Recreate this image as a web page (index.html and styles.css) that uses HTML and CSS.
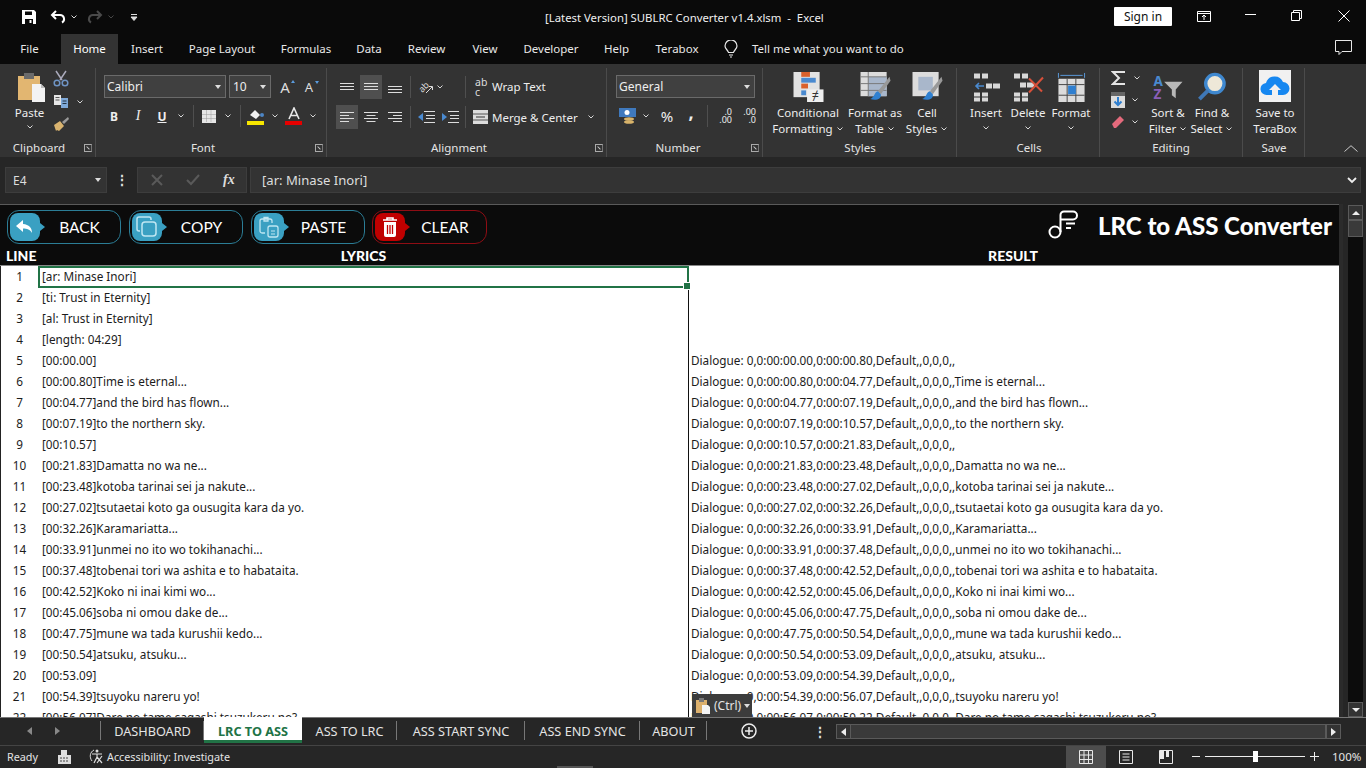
FILE: index.html
```html
<!DOCTYPE html>
<html lang="en">
<head>
<meta charset="utf-8">
<title>SUBLRC Converter</title>
<link rel="stylesheet" href="styles.css">
</head>
<body>
<svg class="defs" aria-hidden="true"><symbol id="chev" viewBox="0 0 8 8"><path d="M1.500 2.500 4 5l2.500-2.500" fill="none" stroke="#d8d8d8" stroke-width="1"/></symbol></svg>
<div class="app">
  <header class="titlebar">
    <div class="qat">
      <svg class="q-save" width="16" height="16" viewBox="0 0 16 16"><path d="M1 1h12l2 2v12H1z" fill="#fff"/><path d="M4 2.500h7v3.500H4zM4 10h8v5H4z" fill="#0a0a0a"/><path d="M8.500 11h2v3h-2z" fill="#fff"/></svg>
      <svg class="q-undo" width="16" height="16" viewBox="0 0 16 16"><path d="M6 2 2 6l4 4M2.500 6H10a4 4 0 0 1 2 7.500" fill="none" stroke="#fff" stroke-width="2"/></svg>
      <svg class="q-ch" width="8" height="8"><use href="#chev"/></svg>
      <svg class="q-redo" width="16" height="16" viewBox="0 0 16 16"><path d="M10 2l4 4-4 4M13.500 6H6a4 4 0 0 0-2 7.500" fill="none" stroke="#4a4a4a" stroke-width="2"/></svg>
      <svg class="q-ch dim" width="8" height="8"><use href="#chev"/></svg>
      <svg class="q-more" width="8" height="9" viewBox="0 0 8 9"><path d="M1 1.500h6M1 4l3 3.500L7 4z" fill="#ddd" stroke="#ddd"/></svg>
    </div>
    <div class="doc-title">[Latest Version] SUBLRC Converter v1.4.xlsm&nbsp; -&nbsp; Excel</div>
    <div class="win">
      <button class="signin">Sign in</button>
      <svg class="w-disp" width="14" height="12" viewBox="0 0 14 12"><path d="M.5 1.500h13v10H.5zM.5 3.500h13M7 10V5M5 7l2-2 2 2" fill="none" stroke="#fff"/></svg>
      <svg class="w-min" width="11" height="2"><path d="M0 .5h11" stroke="#fff"/></svg>
      <svg class="w-max" width="11" height="11" viewBox="0 0 11 11"><path d="M.5 2.500h8v8h-8zM2.500 2.500v-2h8v8h-2" fill="none" stroke="#fff"/></svg>
      <svg class="w-x" width="12" height="12" viewBox="0 0 12 12"><path d="M.5.500l11 11M11.500.500l-11 11" stroke="#fff"/></svg>
    </div>
  </header>

  <nav class="tabs">
    <span>File</span><span class="on">Home</span><span>Insert</span><span>Page Layout</span><span>Formulas</span><span>Data</span><span>Review</span><span>View</span><span>Developer</span><span>Help</span><span>Terabox</span>
    <svg class="bulb" width="14" height="18" viewBox="0 0 14 18"><path d="M4.500 12.500C4 10 1 9 1 6a6 6 0 0 1 12 0c0 3-3 4-3.500 6.500zM5 15h4M6 17h2" fill="none" stroke="#e8e8e8" stroke-width="1.200"/></svg>
    <span class="tell">Tell me what you want to do</span>
    <svg class="comment" width="17" height="16" viewBox="0 0 17 16"><path d="M.5.500h16v11H7l-3 3v-3H.5z" fill="none" stroke="#e8e8e8"/></svg>
  </nav>

  <section class="ribbon">
    <div class="grp g-clip">
      <div class="body clip-body">
        <div class="paste">
          <svg class="paste-ic" width="29" height="31" viewBox="0 0 29 31"><path d="M1 5h22v24H1z" fill="#e2b671"/><path d="M7 2h10v6H7z" fill="#6b6b6b"/><path d="M15 13h9l4 4v14H15z" fill="#f3f3f3"/><path d="M24 13v4h4" fill="#bdbdbd"/></svg>
          <span>Paste</span>
          <svg width="8" height="8"><use href="#chev"/></svg>
        </div>
        <div class="clip-small">
          <svg width="16" height="17" viewBox="0 0 16 17"><path d="M3 1l6 9M13 1L7 10" stroke="#aab" stroke-width="1.500"/><circle cx="4" cy="13" r="2.800" fill="none" stroke="#6f94c4" stroke-width="1.500"/><circle cx="12" cy="13" r="2.800" fill="none" stroke="#6f94c4" stroke-width="1.500"/></svg>
          <div class="copyline"><svg width="16" height="15" viewBox="0 0 16 15"><path d="M1 1h7v10H1z" fill="#e6e6e6"/><path d="M2.500 3.500h4M2.500 6h4" stroke="#555"/><path d="M8 4h7v10H8z" fill="#7fa9d8"/><path d="M9.500 7h4M9.500 9.500h4" stroke="#234"/></svg><svg width="8" height="8"><use href="#chev"/></svg></div>
          <svg width="17" height="16" viewBox="0 0 17 16"><path d="M1 9l6-4 4 5-5 5-2-1-1 1z" fill="#d9b36f"/><path d="M9 6l6-5 1 2-5 5z" fill="#9a9a9a"/></svg>
        </div>
      </div>
      <div class="glabel"><span class="gname gl-clip">Clipboard</span><i class="launch"></i></div>
    </div>

    <div class="grp g-font">
      <div class="body">
        <div class="row f-top">
          <div class="combo c-font"><span>Calibri</span><b></b></div>
          <div class="combo c-size"><span>10</span><b></b></div>
          <span class="bigA up">A</span><span class="bigA down">A</span>
        </div>
        <div class="row f-bot">
          <span class="slot st-b">B</span><span class="slot st-i">I</span><span class="slot st-u">U</span><span class="chv"><svg width="8" height="8"><use href="#chev"/></svg></span><i class="sep"></i>
          <span class="slot"><svg width="14" height="13" viewBox="0 0 14 13"><rect width="14" height="13" fill="#e6e6e6"/><path d="M.5 4.500h13M.5 8.500h13M4.500.500v12M9 .500v12" stroke="#9a9a9a" stroke-dasharray="1 1"/></svg></span><span class="chv"><svg width="8" height="8"><use href="#chev"/></svg></span><i class="sep"></i>
          <span class="slot"><svg width="18" height="18" viewBox="0 0 18 18"><path d="M3 8l5-5 5 5-4 4z" fill="#f0f0f0"/><circle cx="15" cy="8" r="2" fill="#4d86c6"/><rect x="0" y="14" width="17" height="4" fill="#f7e600"/></svg></span><span class="chv"><svg width="8" height="8"><use href="#chev"/></svg></span>
          <span class="slot colorA"><svg width="18" height="18" viewBox="0 0 18 18"><path d="M4 12 9 1l5 11M6 8.500h6" fill="none" stroke="#e8e8e8" stroke-width="1.600"/><rect y="14" x="0" width="17" height="4" fill="#e60000"/></svg></span><span class="chv"><svg width="8" height="8"><use href="#chev"/></svg></span>
        </div>
      </div>
      <div class="glabel"><span class="gname gl-font">Font</span><i class="launch"></i></div>
    </div>

    <div class="grp g-align">
      <div class="body">
        <div class="row a-row">
          <span class="slot"><svg width="14" height="8" viewBox="0 0 14 8"><path d="M0 .5h14M0 3.500h14M0 6.500h14" stroke="#ddd"/></svg></span>
          <span class="slot sel"><svg width="14" height="8" viewBox="0 0 14 8"><path d="M0 .5h14M0 3.500h14M0 6.500h14" stroke="#ddd"/></svg></span>
          <span class="slot low"><svg width="14" height="8" viewBox="0 0 14 8"><path d="M0 .5h14M0 3.500h14M0 6.500h14" stroke="#ddd"/></svg></span>
          <i class="sep"></i>
          <span class="slot"><svg width="16" height="16" viewBox="0 0 16 16"><text class="orient" x="1" y="12" transform="rotate(-45 5 9)">ab</text><path d="M8 14l6-6M11 7.500h3.500V11" fill="none" stroke="#ddd"/></svg></span><span class="chv c-tight"><svg width="8" height="8"><use href="#chev"/></svg></span>
          <i class="sep s2"></i>
          <span class="tool wrap"><span class="abc">ab<br>c</span><span>Wrap Text</span></span>
        </div>
        <div class="row a-row">
          <span class="slot sel"><svg width="14" height="11" viewBox="0 0 14 11"><path d="M0 .5h14M0 3.500h9M0 6.500h14M0 9.500h9" stroke="#ddd"/></svg></span>
          <span class="slot"><svg width="14" height="11" viewBox="0 0 14 11"><path d="M0 .5h14M2.500 3.500h9M0 6.500h14M2.500 9.500h9" stroke="#ddd"/></svg></span>
          <span class="slot"><svg width="14" height="11" viewBox="0 0 14 11"><path d="M0 .5h14M5 3.500h9M0 6.500h14M5 9.500h9" stroke="#ddd"/></svg></span>
          <i class="sep"></i>
          <span class="slot"><svg width="18" height="12" viewBox="0 0 18 12"><path d="M7 .5h11M9 4.500h9M9 7.500h9M7 11.500h11" stroke="#ddd"/><path d="M6 2v8L1 6z" fill="#4a8ad0"/></svg></span>
          <span class="slot"><svg width="18" height="12" viewBox="0 0 18 12"><path d="M7 .5h11M9 4.500h9M9 7.500h9M7 11.500h11" stroke="#ddd"/><path d="M1 2v8l5-4z" fill="#4a8ad0"/></svg></span>
          <i class="sep s2b"></i>
          <span class="tool merge"><svg width="15" height="14" viewBox="0 0 15 14"><rect width="15" height="14" fill="#dcdcdc"/><path d="M0 4h15M0 10h15" stroke="#555"/><path d="M3 7h9" stroke="#333"/></svg><span>Merge &amp; Center</span><svg class="mchev" width="8" height="8"><use href="#chev"/></svg></span>
        </div>
      </div>
      <div class="glabel"><span class="gname gl-align">Alignment</span><i class="launch"></i></div>
    </div>

    <div class="grp g-num">
      <div class="body">
        <div class="row n-top"><div class="combo c-gen"><span>General</span><b></b></div></div>
        <div class="row n-bot">
          <span class="slot"><svg width="18" height="16" viewBox="0 0 18 16"><rect width="17" height="9" fill="#3f79bd"/><circle cx="8" cy="4.500" r="2.500" fill="#fff"/><ellipse cx="10" cy="11" rx="5" ry="1.800" fill="#d8b36a"/><ellipse cx="10" cy="14" rx="5" ry="1.800" fill="#d8b36a"/></svg></span><span class="chv"><svg width="8" height="8"><use href="#chev"/></svg></span>
          <span class="slot txt-big">%</span><span class="slot comma">,</span><i class="sep"></i>
          <span class="slot small-num"><em>.0</em><em>.00</em></span><span class="slot small-num"><em>.00</em><em>.0</em></span>
        </div>
      </div>
      <div class="glabel"><span class="gname gl-num">Number</span><i class="launch"></i></div>
    </div>

    <div class="grp g-styles">
      <div class="body cols">
        <div class="big bw-cond">
          <svg width="31" height="31" viewBox="0 0 31 31"><rect width="27" height="26" fill="#e2e2e2"/><path d="M8 0h9v5H8z" fill="#d9612c"/><path d="M8 6h15v5H8z" fill="#4a8ad0"/><path d="M8 12h7v5H8z" fill="#d9612c"/><path d="M8 19h5v5H8z" fill="#4a8ad0"/><rect x="14" y="18" width="17" height="13" fill="#efefef"/><text class="neq" x="22.500" y="29">≠</text></svg>
          <span>Conditional</span><span>Formatting <svg width="8" height="8"><use href="#chev"/></svg></span>
        </div>
        <div class="big bw-tab">
          <svg width="31" height="31" viewBox="0 0 31 31"><rect width="27" height="25" fill="#dcdcdc"/><path d="M8 5h19v20H8z" fill="#a9b7cb"/><path d="M0 5h27M0 12h27M0 19h27M8 0v25" stroke="#777"/><path d="M30 5 18 20l3 3L31 9z" fill="#999"/><path d="M18 20c-4 1-3 6-8 8 6 2 12 0 11-5z" fill="#2f80d0"/></svg>
          <span>Format as</span><span>Table <svg width="8" height="8"><use href="#chev"/></svg></span>
        </div>
        <div class="big bw-cell">
          <svg width="31" height="31" viewBox="0 0 31 31"><rect width="27" height="25" fill="#dcdcdc"/><path d="M6 5h15v14H6z" fill="#a9b7cb"/><path d="M30 5 18 20l3 3L31 9z" fill="#999"/><path d="M18 20c-4 1-3 6-8 8 6 2 12 0 11-5z" fill="#2f80d0"/></svg>
          <span>Cell</span><span>Styles <svg width="8" height="8"><use href="#chev"/></svg></span>
        </div>
      </div>
      <div class="glabel"><span class="gname gl-styles">Styles</span></div>
    </div>

    <div class="grp g-cells">
      <div class="body cols">
        <div class="big bw-ins">
          <svg width="27" height="29" viewBox="0 0 27 29"><path d="M1 1h6v5H1zM9 1h6v5H9zM1 20h6v4H1zM9 20h6v4H9zM1 25h6v4H1zM9 25h6v4H9zM13 11h6v5h-6zM20 11h7v5h-7z" fill="#d8d8d8"/><path d="M11 13.500H3M6 10.500l-3 3 3 3" fill="none" stroke="#4a8ad0" stroke-width="1.600"/></svg>
          <span>Insert</span><svg width="8" height="8"><use href="#chev"/></svg>
        </div>
        <div class="big bw-del">
          <svg width="31" height="29" viewBox="0 0 31 29"><path d="M1 1h6v5H1zM9 1h6v5H9zM1 20h6v4H1zM9 20h6v4H9zM1 25h6v4H1zM9 25h6v4H9zM7 10h6v5H7zM14 10h7v5h-7z" fill="#d8d8d8"/><path d="M16 6l13 13M30 5 16 20" stroke="#d8503a" stroke-width="2"/></svg>
          <span>Delete</span><svg width="8" height="8"><use href="#chev"/></svg>
        </div>
        <div class="big bw-fmt">
          <svg width="29" height="31" viewBox="0 0 29 31"><path d="M1 1v5M28 1v5M3 3.500h23" stroke="#5b9bdc"/><rect y="7" x="1" width="27" height="24" fill="#dcdcdc"/><path d="M1 13h27M1 24h27M10 7v24M19 7v24" stroke="#444"/><rect x="11" y="14" width="8" height="9" fill="#2f7fd0"/></svg>
          <span>Format</span><svg width="8" height="8"><use href="#chev"/></svg>
        </div>
      </div>
      <div class="glabel"><span class="gname gl-cells">Cells</span></div>
    </div>

    <div class="grp g-edit">
      <div class="body cols">
        <div class="ed-small">
          <div class="ed-line"><svg width="16" height="16" viewBox="0 0 16 16"><path d="M14 2H2l6 6-6 6h12" fill="none" stroke="#e4e4e4" stroke-width="2"/></svg><svg width="8" height="8"><use href="#chev"/></svg></div>
          <div class="ed-line"><svg width="14" height="16" viewBox="0 0 14 16"><rect width="14" height="16" fill="#dcdcdc"/><rect width="14" height="4" fill="#666"/><path d="M7 5v8M3.500 9.500 7 13l3.500-3.500" fill="none" stroke="#2f7fd0" stroke-width="2"/></svg><svg width="8" height="8"><use href="#chev"/></svg></div>
          <div class="ed-line"><svg width="14" height="14" viewBox="0 0 14 14"><path d="M1 9l8-8 4 4-8 8H3z" fill="#e46a7c"/></svg><svg width="8" height="8"><use href="#chev"/></svg></div>
        </div>
        <div class="big bw-sort">
          <svg width="32" height="31" viewBox="0 0 32 31"><text class="az a" x="1" y="14">A</text><text class="az z" x="1" y="28">Z</text><path d="M12 10h19l-7 8v9l-4-3v-6z" fill="#b8b8b8"/></svg>
          <span>Sort &amp;</span><span>Filter <svg width="8" height="8"><use href="#chev"/></svg></span>
        </div>
        <div class="big bw-find">
          <svg width="30" height="31" viewBox="0 0 30 31"><circle cx="18" cy="12" r="9.500" fill="#eee8d8" stroke="#3f88cf" stroke-width="3.500"/><path d="M11 19 2 28" stroke="#3f78b8" stroke-width="4"/></svg>
          <span>Find &amp;</span><span>Select <svg width="8" height="8"><use href="#chev"/></svg></span>
        </div>
      </div>
      <div class="glabel"><span class="gname gl-edit">Editing</span></div>
    </div>

    <div class="grp g-save">
      <div class="body cols">
        <div class="big bw-save">
          <svg width="32" height="32" viewBox="0 0 32 32"><rect width="32" height="32" fill="#f1f1f1"/><path d="M8 25a6 6 0 0 1-1-12 9 9 0 0 1 17-1 6.500 6.500 0 0 1 0 13h-5v-5h3l-6-6-6 6h3v5z" fill="#1687f0"/></svg>
          <span>Save to</span><span>TeraBox</span>
        </div>
      </div>
      <div class="glabel"><span class="gname gl-save">Save</span></div>
    </div>
    <div class="grp g-end"><svg class="collapse" width="14" height="7" viewBox="0 0 14 7"><path d="M.5 6.500 7 .7l6.500 5.800" fill="none" stroke="#ccc"/></svg></div>
  </section>

  <section class="fbar">
    <div class="namebox"><span>E4</span><b></b></div>
    <span class="dots">⋮</span>
    <div class="fbtns">
      <svg width="12" height="12" viewBox="0 0 12 12"><path d="M1 1l10 10M11 1 1 11" stroke="#5a5a5a" stroke-width="2"/></svg>
      <svg width="14" height="12" viewBox="0 0 14 12"><path d="M1 6l4 4 8-9" fill="none" stroke="#5a5a5a" stroke-width="2"/></svg>
      <em class="fx">fx</em>
    </div>
    <div class="finput"><span>[ar: Minase Inori]</span><svg width="10" height="7" viewBox="0 0 10 7"><path d="M1 1l4 4 4-4" fill="none" stroke="#eee" stroke-width="1.800"/></svg></div>
  </section>

  <main class="work">
    <div class="sheet">
      <div class="shead">
        <div class="btnbar">
          <button class="act"><span class="bub"><svg width="20" height="16" viewBox="0 0 20 16"><path d="M8 1 1 7l7 6V9.500c4 0 7 1 9 4.500 0-5-3-8.500-9-9z" fill="#fff"/></svg></span><span class="lbl">BACK</span></button>
          <button class="act"><span class="bub"><svg width="22" height="22" viewBox="0 0 22 22"><path d="M4 15H3a2 2 0 0 1-2-2V3a2 2 0 0 1 2-2h10a2 2 0 0 1 2 2v1" fill="none" stroke="#bfe6f2" stroke-width="1.500"/><rect x="6" y="6" width="14" height="14" rx="3" fill="none" stroke="#bfe6f2" stroke-width="1.500"/></svg></span><span class="lbl">COPY</span></button>
          <button class="act"><span class="bub"><svg width="20" height="22" viewBox="0 0 20 22"><path d="M6 17H3a2 2 0 0 1-2-2V5a2 2 0 0 1 2-2h8a2 2 0 0 1 2 2v2M5 1.500h4V5H5z" fill="none" stroke="#bfe6f2" stroke-width="1.300"/><rect x="9" y="10" width="10" height="11" rx="2" fill="none" stroke="#bfe6f2" stroke-width="1.300"/><path d="M12 15h4M12 18h4" stroke="#bfe6f2"/></svg></span><span class="lbl">PASTE</span></button>
          <button class="act red"><span class="bub"><svg width="16" height="20" viewBox="0 0 16 20"><path d="M1 3h14M5 3V1h6v2" fill="none" stroke="#fff" stroke-width="1.600"/><path d="M2 5h12v13a2 2 0 0 1-2 2H4a2 2 0 0 1-2-2z" fill="#fff"/><path d="M5.500 8v9M8 8v9M10.500 8v9" stroke="#c00000" stroke-width="1.300"/></svg></span><span class="lbl">CLEAR</span></button>
          <svg class="note" width="30" height="30" viewBox="0 0 30 30"><circle cx="7" cy="22" r="5.500" fill="none" stroke="#fff" stroke-width="2"/><path d="M12.500 22V5a3.500 3.500 0 0 1 3.500-3.500h9a3.500 3.500 0 0 1 0 8H13M18 13.500h9M18 18h5" fill="none" stroke="#fff" stroke-width="2"/></svg>
          <h1>LRC to ASS Converter</h1>
        </div>
        <div class="gridrow collabels"><b class="l-line">LINE</b><b>LYRICS</b><b>RESULT</b></div>
      </div>
      <div class="rows">
        <div class="gridrow r active"><span>1</span><span class="ly">[ar: Minase Inori]</span><span class="re"></span></div>
        <div class="gridrow r"><span>2</span><span class="ly">[ti: Trust in Eternity]</span><span class="re"></span></div>
        <div class="gridrow r"><span>3</span><span class="ly">[al: Trust in Eternity]</span><span class="re"></span></div>
        <div class="gridrow r"><span>4</span><span class="ly">[length: 04:29]</span><span class="re"></span></div>
        <div class="gridrow r"><span>5</span><span class="ly">[00:00.00]</span><span class="re">Dialogue: 0,0:00:00.00,0:00:00.80,Default,,0,0,0,,</span></div>
        <div class="gridrow r"><span>6</span><span class="ly">[00:00.80]Time is eternal...</span><span class="re">Dialogue: 0,0:00:00.80,0:00:04.77,Default,,0,0,0,,Time is eternal...</span></div>
        <div class="gridrow r"><span>7</span><span class="ly">[00:04.77]and the bird has flown...</span><span class="re">Dialogue: 0,0:00:04.77,0:00:07.19,Default,,0,0,0,,and the bird has flown...</span></div>
        <div class="gridrow r"><span>8</span><span class="ly">[00:07.19]to the northern sky.</span><span class="re">Dialogue: 0,0:00:07.19,0:00:10.57,Default,,0,0,0,,to the northern sky.</span></div>
        <div class="gridrow r"><span>9</span><span class="ly">[00:10.57]</span><span class="re">Dialogue: 0,0:00:10.57,0:00:21.83,Default,,0,0,0,,</span></div>
        <div class="gridrow r"><span>10</span><span class="ly">[00:21.83]Damatta no wa ne...</span><span class="re">Dialogue: 0,0:00:21.83,0:00:23.48,Default,,0,0,0,,Damatta no wa ne...</span></div>
        <div class="gridrow r"><span>11</span><span class="ly">[00:23.48]kotoba tarinai sei ja nakute...</span><span class="re">Dialogue: 0,0:00:23.48,0:00:27.02,Default,,0,0,0,,kotoba tarinai sei ja nakute...</span></div>
        <div class="gridrow r"><span>12</span><span class="ly">[00:27.02]tsutaetai koto ga ousugita kara da yo.</span><span class="re">Dialogue: 0,0:00:27.02,0:00:32.26,Default,,0,0,0,,tsutaetai koto ga ousugita kara da yo.</span></div>
        <div class="gridrow r"><span>13</span><span class="ly">[00:32.26]Karamariatta...</span><span class="re">Dialogue: 0,0:00:32.26,0:00:33.91,Default,,0,0,0,,Karamariatta...</span></div>
        <div class="gridrow r"><span>14</span><span class="ly">[00:33.91]unmei no ito wo tokihanachi...</span><span class="re">Dialogue: 0,0:00:33.91,0:00:37.48,Default,,0,0,0,,unmei no ito wo tokihanachi...</span></div>
        <div class="gridrow r"><span>15</span><span class="ly">[00:37.48]tobenai tori wa ashita e to habataita.</span><span class="re">Dialogue: 0,0:00:37.48,0:00:42.52,Default,,0,0,0,,tobenai tori wa ashita e to habataita.</span></div>
        <div class="gridrow r"><span>16</span><span class="ly">[00:42.52]Koko ni inai kimi wo...</span><span class="re">Dialogue: 0,0:00:42.52,0:00:45.06,Default,,0,0,0,,Koko ni inai kimi wo...</span></div>
        <div class="gridrow r"><span>17</span><span class="ly">[00:45.06]soba ni omou dake de...</span><span class="re">Dialogue: 0,0:00:45.06,0:00:47.75,Default,,0,0,0,,soba ni omou dake de...</span></div>
        <div class="gridrow r"><span>18</span><span class="ly">[00:47.75]mune wa tada kurushii kedo...</span><span class="re">Dialogue: 0,0:00:47.75,0:00:50.54,Default,,0,0,0,,mune wa tada kurushii kedo...</span></div>
        <div class="gridrow r"><span>19</span><span class="ly">[00:50.54]atsuku, atsuku...</span><span class="re">Dialogue: 0,0:00:50.54,0:00:53.09,Default,,0,0,0,,atsuku, atsuku...</span></div>
        <div class="gridrow r"><span>20</span><span class="ly">[00:53.09]</span><span class="re">Dialogue: 0,0:00:53.09,0:00:54.39,Default,,0,0,0,,</span></div>
        <div class="gridrow r"><span>21</span><span class="ly">[00:54.39]tsuyoku nareru yo!</span><span class="re">Dialogue: 0,0:00:54.39,0:00:56.07,Default,,0,0,0,,tsuyoku nareru yo!</span></div>
        <div class="gridrow r"><span>22</span><span class="ly">[00:56.07]Dare no tame sagashi tsuzukeru no?</span><span class="re">Dialogue: 0,0:00:56.07,0:00:59.22,Default,,0,0,0,,Dare no tame sagashi tsuzukeru no?</span></div>
      </div>
      <div class="selbox"></div>
      <div class="pastetag"><svg width="16" height="17" viewBox="0 0 16 17"><path d="M1 3h11v13H1z" fill="#dcb06c"/><path d="M4 1h5v4H4z" fill="#777"/><path d="M7 8h6l2 2v7H7z" fill="#f4f4f4"/></svg><span>(Ctrl)</span><i></i></div>
    </div>
    <aside class="vscroll">
      <span class="sbtn"><i class="tri-up"></i></span>
      <span class="sthumb"></span>
      <span class="strack"></span>
      <span class="sbtn"><i class="tri-down"></i></span>
    </aside>
  </main>

  <footer class="sheettabs">
    <span class="nav"><i class="t-left"></i><i class="t-right"></i></span>
    <span class="tab">DASHBOARD</span>
    <span class="tab current">LRC TO ASS</span>
    <span class="tab">ASS TO LRC</span>
    <span class="tab">ASS START SYNC</span>
    <span class="tab">ASS END SYNC</span>
    <span class="tab">ABOUT</span>
    <svg class="plus" width="16" height="16" viewBox="0 0 16 16"><circle cx="8" cy="8" r="7" fill="none" stroke="#eee" stroke-width="1.500"/><path d="M4 8h8M8 4v8" stroke="#eee" stroke-width="1.500"/></svg>
    <span class="dots tabdots">⋮</span>
    <div class="hscroll"><span class="sbtn h"><i class="t-left w"></i></span><span class="hthumb"></span><span class="sbtn h"><i class="t-right w"></i></span></div>
  </footer>

  <footer class="status">
    <span class="ready">Ready</span>
    <svg class="macro" width="13" height="14" viewBox="0 0 13 14"><rect x="3" width="6" height="5" fill="#ddd"/><rect y="5" width="13" height="9" fill="#ddd"/><path d="M2 8h9M2 11h9" stroke="#444" stroke-dasharray="2 1"/></svg>
    <svg class="acc" width="16" height="15" viewBox="0 0 16 15"><path d="M5 1C1 3 0 8 3 12" fill="none" stroke="#ddd"/><circle cx="8" cy="2" r="1.500" fill="#ddd"/><path d="M3 5h10M8 5v3l-3 6M8 8l5 6M13 7l-5 7" stroke="#ddd" stroke-width="1.200"/></svg>
    <span class="acc-t">Accessibility: Investigate</span>
    <div class="views">
      <span class="view on"><svg width="14" height="14" viewBox="0 0 14 14"><path d="M.5.500h13v13H.5zM.5 5h13M.5 9.500h13M5 .500v13M9.500.500v13" fill="none" stroke="#e8e8e8"/></svg></span>
      <span class="view"><svg width="14" height="14" viewBox="0 0 14 14"><path d="M.5.500h13v13H.5z" fill="none" stroke="#e8e8e8"/><path d="M3.500 4h7M3.500 7h7M3.500 10h7" stroke="#e8e8e8"/></svg></span>
      <span class="view"><svg width="14" height="14" viewBox="0 0 14 14"><path d="M.5.500h13v13H.5z" fill="none" stroke="#e8e8e8"/><path d="M1 1h4v8H1zM7 1h3v6H7z" fill="#e8e8e8"/></svg></span>
    </div>
    <div class="zoomer"><i class="zm"></i><span class="zline"><i class="zthumb"></i></span><i class="zp"></i></div>
    <span class="pct">100%</span>
    <i class="blip"></i>
  </footer>
</div>
</body>
</html>
```

FILE: styles.css
```css
* { box-sizing: border-box; }
html, body { margin: 0; height: 100%; overflow: hidden; }
body { font-family: "Noto Sans", "Open Sans", sans-serif; font-size: 12px; color: #e6e6e6; background: #262626; }
.defs { display: none; }
svg { display: block; flex: none; }
button { font: inherit; border: 0; padding: 0; }
.app { position: relative; width: 1366px; height: 768px; display: flex; flex-direction: column; }

.titlebar { height: 34px; background: #0a0a0a; display: grid; grid-template-columns: 545px 560px 1fr; align-items: center; flex: none; }
.qat { display: flex; align-items: center; padding-left: 21px; }
.q-undo { margin-left: 13px; }
.q-ch { margin-left: 4px; }
.q-redo { margin-left: 9px; }
.q-ch.dim { opacity: .3; }
.q-more { margin-left: 15px; }
.doc-title { font-size: 11.350px; color: #efefef; }
.win { display: flex; align-items: center; padding-left: 9px; }
.signin { width: 58px; height: 19px; background: #fff; color: #111; font-size: 12px; border-radius: 1px; margin-top: -1px; }
.w-disp { margin-left: 25px; margin-top: -3px; }
.w-min { margin-left: 34px; margin-top: -4px; }
.w-max { margin-left: 35px; margin-top: -3px; }
.w-x { margin-left: 36px; margin-top: -3px; }

.tabs { height: 30px; background: #0a0a0a; display: grid; grid-template-columns: 59px 59px 58px 92px 76px 50px 65px 52px 80px 51px 70px 40px 583px 1fr; align-items: stretch; flex: none; font-size: 11.500px; }
.tabs > span { display: flex; align-items: center; justify-content: center; color: #e8e8e8; padding-bottom: 2px; }
.tabs > .on { background: #333; color: #fff; margin-left: 2px; }
.tabs > .tell { justify-content: flex-start; }
.bulb { align-self: center; justify-self: center; margin-left: -2px; }
.comment { align-self: center; margin-top: -2px; }

.ribbon { height: 93px; background: #333; display: grid; grid-template-columns: 96px 231px 280px 156px 194px 143px 143px 62px 1fr; flex: none; }
.grp { position: relative; display: flex; flex-direction: column; border-right: 1px solid #4b4b4b; margin: 4px 0 5px; }
.g-end { border: 0; align-items: flex-end; justify-content: flex-end; padding: 0 8px 5px 0; }
.body { height: 71px; display: flex; flex-direction: column; font-size: 11.500px; color: #eee; }
.body.cols { flex-direction: row; }
.glabel { height: 18px; display: flex; align-items: center; position: relative; color: #e4e4e4; font-size: 11.500px; }
.gname { position: absolute; top: 1px; transform: translateX(-50%); white-space: nowrap; line-height: 16px; }
.gl-clip { left: 39px; } .gl-font { left: 107px; } .gl-align { left: 132px; } .gl-num { left: 71px; }
.gl-styles { left: 97px; } .gl-cells { left: 72px; } .gl-edit { left: 71px; } .gl-save { left: 31px; }
.launch { position: absolute; right: 3px; top: 5px; width: 8px; height: 8px; border: 1px solid #aaa; border-right-color: #777; }
.launch::after { content: ""; position: absolute; left: 1px; top: 1px; width: 4px; height: 1px; background: #ccc; transform: rotate(45deg) translate(1px, 1px); }

.clip-body { flex-direction: row; padding-left: 15px; }
.paste { width: 29px; display: flex; flex-direction: column; align-items: center; padding-top: 3px; }
.paste-ic { margin-left: 3px; }
.paste span { margin-top: 2px; line-height: 17px; }
.paste svg:last-child { margin-top: 2px; }
.clip-small { display: flex; flex-direction: column; gap: 7px; padding: 2px 0 0 9px; }
.copyline { display: flex; align-items: center; gap: 7px; }

.row { display: flex; align-items: center; height: 30px; }
.slot { width: 24px; height: 24px; flex: none; display: flex; align-items: center; justify-content: center; }
.chv { width: 14px; flex: none; display: flex; justify-content: center; }
.sep { width: 1px; height: 22px; background: #4f4f4f; flex: none; margin: 0 3px 0 5px; }
.sel { background: #4f4f4f content-box; padding: 0 1px; }
.combo { height: 23px; border: 1px solid #6a6a6a; background: #404040; display: flex; align-items: center; justify-content: space-between; padding: 0 4px 0 2px; color: #eee; font-size: 12px; }
.combo b, .namebox b { width: 0; height: 0; border: 3px solid transparent; border-top: 4px solid #ddd; border-bottom: 0; }
.f-top { padding: 7px 0 0 8px; height: 30px; }
.c-font { width: 122px; }
.c-size { width: 42px; margin-left: 3px; padding-left: 3px; }
.bigA { font-size: 15px; width: 24px; text-align: center; color: #ddd; position: relative; }
.bigA.up { margin-left: 2px; } .bigA.down { font-size: 13px; }
.bigA::after { content: ""; position: absolute; right: 2px; top: 3px; border: 2px solid transparent; border-bottom: 3px solid #5b9bdc; border-top: 0; }
.bigA.down::after { border-bottom: 0; border-top: 3px solid #5b9bdc; }
.f-bot { padding-left: 6px; height: 24px; margin-top: 6px; font-size: 12px; }
.st-b { font-weight: 700; } .st-i { font-style: italic; font-family: "Liberation Serif", serif; font-size: 14px; } .st-u { text-decoration: underline; font-weight: 700; }

.g-align .body { padding: 7px 0 0 8px; }
.g-align .row { height: 24px; }
.g-align .row + .row { margin-top: 6px; }
.g-align .sep { margin: 0 3px; }
.low { padding-top: 6px; }
.c-tight { width: 8px; margin-left: -2px; }
.g-align .s2 { margin: 0 9px 0 21px; }
.g-align .s2b { margin: 0 7px 0 3px; }
.tool { display: flex; align-items: center; gap: 5px; white-space: nowrap; }
.wrap > span:last-child { margin-top: -2px; }
.merge { gap: 4px; }
.abc { font-size: 10.500px; width: 12px; line-height: 10px; color: #ddd; }
.orient { font-size: 9px; fill: #ddd; font-family: "Noto Sans", sans-serif; }
.mchev { margin-left: 5px; }

.g-num .body { padding-left: 9px; }
.n-top { height: 30px; padding-top: 7px; }
.c-gen { width: 139px; }
.n-bot { height: 24px; margin-top: 6px; font-size: 12px; }
.n-bot .chv { width: 12px; margin-right: 3px; }
.txt-big { font-size: 15px; }
.comma { font-size: 18px; font-weight: 700; padding-bottom: 8px; }
.n-bot .sep { margin: 0 3px 0 4px; }
.small-num { flex-direction: column; font-size: 9px; line-height: 8px; align-items: flex-end; padding-right: 3px; }
.small-num em { font-style: normal; }

.big { display: flex; flex-direction: column; align-items: center; line-height: 16px; padding-top: 4px; white-space: nowrap; flex: none; }
.big > svg:first-child { height: 30px; margin-bottom: 3px; }
.big span svg { display: inline-block; }
.big > svg:last-child { margin-top: 3px; }
.bw-cond { width: 90px; }
.bw-tab { width: 60px; margin-left: -8px; }
.bw-cell { width: 44px; }
.neq { font-size: 13px; fill: #333; text-anchor: middle; font-family: "Noto Sans", sans-serif; }
.bw-ins { width: 42px; margin-left: 8px; }
.bw-del { width: 42px; }
.bw-fmt { width: 44px; }
.ed-small { width: 46px; padding: 2px 0 0 11px; display: flex; flex-direction: column; gap: 6px; }
.ed-line { display: flex; align-items: center; gap: 6px; height: 16px; }
.bw-sort { width: 44px; }
.bw-find { width: 44px; }
.az { font-size: 14px; font-weight: 700; font-family: "Noto Sans", sans-serif; }
.az.a { fill: #4a8ad0; } .az.z { fill: #8a5fb8; }
.bw-save { width: 62px; margin-left: 1px; padding-top: 2px; }
.bw-save > svg:first-child { height: 32px; }

.fbar { height: 26px; margin: 10px 0 11px; display: flex; align-items: stretch; padding-left: 5px; flex: none; }
.namebox { width: 102px; background: #333; border: 1px solid #3d3d3d; display: flex; align-items: center; justify-content: space-between; padding: 0 5px 0 7px; font-size: 12px; color: #ddd; }
.dots { width: 30px; text-align: center; font-weight: 700; color: #ddd; font-size: 14px; line-height: 26px; }
.fbtns { width: 110px; background: #333; border: 1px solid #3d3d3d; display: flex; align-items: center; gap: 23px; padding-left: 13px; }
.fx { font-family: "Liberation Serif", serif; font-size: 14px; font-weight: 700; color: #ddd; }
.finput { flex: 1; margin: 0 5px 0 3px; background: #333; border: 1px solid #3d3d3d; display: flex; align-items: center; justify-content: space-between; padding: 0 3px 0 11px; font-size: 13.100px; color: #ddd; }

.work { height: 513px; display: flex; flex: none; }
.sheet { position: relative; width: 1343px; height: 513px; overflow: hidden; background: #fff; border-right: 4px solid #2b2b2b; }
.shead { height: 62px; background: #0b0b0b; color: #fff; border-top: 1px solid #5a5a5a; border-bottom: 1px solid #888; margin-right: -4px; }
.btnbar { display: flex; align-items: flex-start; gap: 8px; padding: 5px 0 0 7px; height: 40px; }
.act { width: 114px; height: 34px; border: 1px solid #2b7d96; border-radius: 12px; background: #0b0b0b; color: #fff; display: flex; align-items: center; padding-left: 2px; font-family: Lato, "Liberation Sans", sans-serif; font-size: 15.500px; }
.act.red { border-color: #8e0d14; width: 115px; margin-left: -1px; }
.bub { position: relative; width: 30px; height: 28px; border-radius: 8px; background: #3aa0c2; display: flex; align-items: center; justify-content: center; flex: none; }
.bub::after { content: ""; position: absolute; right: -5px; top: 10px; border: 4px solid transparent; border-left: 5px solid #3aa0c2; border-right: 0; }
.red .bub { background: #c00000; }
.red .bub::after { border-left-color: #c00000; }
.lbl { flex: 1; text-align: center; padding-right: 9px; padding-left: 8px; }
.note { margin-left: auto; margin-right: 12px; }
.btnbar h1 { margin: 1px 11px 0 0; font-family: Lato, "Liberation Sans", sans-serif; font-size: 24px; font-weight: 900; line-height: 30px; white-space: nowrap; }
.gridrow { display: grid; grid-template-columns: 38px 651px 1fr; }
.collabels { height: 20px; line-height: 20px; text-align: center; font-family: Lato, "Liberation Sans", sans-serif; font-size: 14px; padding-right: 6px; margin-top: 1px; }
.collabels b { font-weight: 900; }
.l-line { text-align: left; padding-left: 6px; }
.rows { color: #1c1c1c; font-size: 11.750px; border-left: 1px solid #222; }
.rows .gridrow { grid-template-columns: 37px 651px 1fr; }
.r { height: 21px; line-height: 21px; }
.r > span { white-space: nowrap; overflow: hidden; }
.r > span:first-child { text-align: center; }
.ly { padding-left: 4px; border-right: 1px solid #111; }
.re { padding-left: 2px; }
.selbox { position: absolute; left: 38px; top: 62px; width: 651px; height: 22px; border: 2px solid #217346; }
.selbox::after { content: ""; position: absolute; right: -4px; bottom: -4px; width: 6px; height: 6px; background: #217346; border: 1px solid #fff; }
.pastetag { position: absolute; left: 692px; top: 490px; width: 60px; height: 23px; background: #3c3c3c; display: flex; align-items: center; padding-left: 3px; gap: 3px; color: #e4e4e4; font-size: 12px; }
.pastetag i { width: 0; height: 0; border: 3px solid transparent; border-top: 4px solid #ddd; border-bottom: 0; }

.vscroll { width: 23px; height: 513px; padding: 1px 3px 0 5px; background: #262626; display: flex; flex-direction: column; }
.sbtn { width: 15px; height: 15px; background: #333; border: 1px solid #5a5a5a; display: flex; align-items: center; justify-content: center; flex: none; }
.sthumb { height: 17px; background: #3a3a3a; border: 1px solid #5a5a5a; flex: none; }
.strack { flex: 1; background: #0c0c0c; }
.tri-up { border: 4px solid transparent; border-bottom: 4px solid #eee; border-top: 0; }
.tri-down { border: 4px solid transparent; border-top: 4px solid #eee; border-bottom: 0; }

.sheettabs { height: 28px; background: #262626; border-top: 1px solid #777; display: grid; grid-template-columns: 101px 103px 98px 95px 128px 115px 67px 50px 79px 505px; flex: none; font-size: 12.700px; position: relative; }
.nav { display: flex; align-items: center; gap: 23px; padding-left: 27px; border-right: 1px solid #777; margin: 3px 0 5px; }
.t-left { border: 4px solid transparent; border-right: 5px solid #888; border-left: 0; }
.t-right { border: 4px solid transparent; border-left: 5px solid #888; border-right: 0; }
.t-left.w { border-right-color: #eee; } .t-right.w { border-left-color: #eee; }
.tab { text-align: center; line-height: 26px; white-space: nowrap; color: #e4e4e4; position: relative; }
.tab:not(.current)::after { content: ""; position: absolute; right: 0; top: 3px; bottom: 5px; width: 1px; background: #777; }
.tab.current { background: #fff; color: #217346; font-weight: 700; border-bottom: 3px solid #217346; margin-top: -1px; line-height: 28px; height: 26px; }
.plus { align-self: center; margin: 0 0 1px 34px; }
.tabdots { width: 32px; margin-left: 47px; line-height: 27px; }
.hscroll { height: 15px; margin: 6px 0 0 0; display: flex; }
.hthumb { flex: 1; background: #3a3a3a; border: 1px solid #5a5a5a; border-left: 0; }
.sbtn.h { width: 15px; }

.status { height: 23px; background: #262626; border-top: 1px solid #444; display: flex; align-items: center; position: relative; flex: none; font-size: 10.800px; color: #e4e4e4; padding-bottom: 1px; white-space: nowrap; }
.ready { margin-left: 7px; }
.macro { margin-left: 20px; }
.acc { margin-left: 18px; }
.acc-t { margin-left: 2px; flex: none; }
.views { display: flex; margin-left: auto; height: 22px; margin-bottom: -1px; }
.view { width: 40px; display: flex; align-items: center; justify-content: center; }
.view.on { background: #4d4d4d; }
.zoomer { display: flex; align-items: center; margin-left: 6px; gap: 4px; width: 127px; flex: none; }
.zm { width: 8px; height: 1px; background: #eee; }
.zline { position: relative; width: 100px; height: 1px; background: #eee; margin-left: 1px; }
.zthumb { position: absolute; left: 48px; top: -5px; width: 5px; height: 11px; background: #fff; }
.zp { position: relative; width: 9px; height: 1px; background: #eee; margin-left: 1px; }
.zp::after { content: ""; position: absolute; left: 4px; top: -4px; width: 1px; height: 9px; background: #eee; }
.pct { margin-left: 13px; margin-right: 8px; flex: none; width: 26px; font-size: 11.500px; }
.blip { position: absolute; left: 557px; top: 20px; width: 36px; height: 2px; background: #555; }
```
